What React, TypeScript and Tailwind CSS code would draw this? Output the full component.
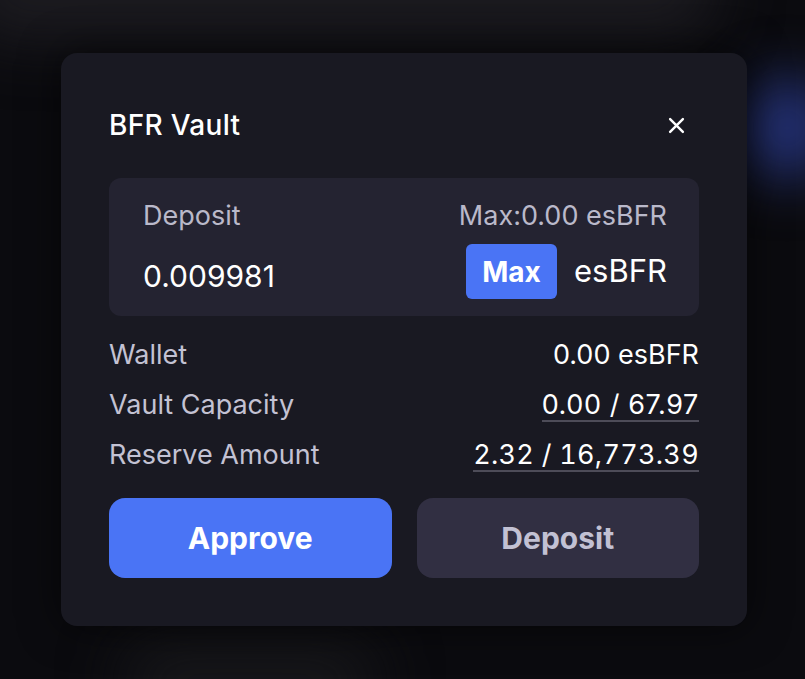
export default function App() {
  return (
    <div className="relative flex h-[679px] w-[805px] items-center justify-center overflow-hidden bg-[#0b0b0f] font-[Inter,'Liberation_Sans',sans-serif]">
      {/* background blurs */}
      <div className="pointer-events-none absolute left-[-40px] top-[-60px] h-[100px] w-[760px] rounded-full bg-[#1c1b20] blur-[30px]" />
      <div className="pointer-events-none absolute left-[742px] top-[78px] h-[100px] w-[90px] rounded-full bg-[#25337a] blur-[28px]" />
      <div className="pointer-events-none absolute left-[120px] top-[640px] h-[80px] w-[260px] rounded-full bg-[#17171a] blur-[30px]" />

      <div className="relative ml-[3px] flex h-[573px] w-[686px] flex-col rounded-[16px] bg-[#191922] px-[48px] pt-[48px] shadow-[0_0_40px_rgba(0,0,0,0.6)]">
        <div className="flex h-[48px] items-center justify-between">
          <span className="text-[28px] font-medium leading-none tracking-[0.3px] text-white">BFR Vault</span>
          <svg width="17" height="17" viewBox="0 0 16 16" className="mr-[14px]" fill="none">
            <path d="M2 2L14 14M14 2L2 14" stroke="white" strokeWidth="2.3" strokeLinecap="round" />
          </svg>
        </div>

        <div className="mt-[29px] flex h-[138px] flex-col rounded-[12px] bg-[#242331] pl-[34px] pr-[32px] pt-[24px]">
          <div className="flex h-[28px] items-center justify-between text-[27px] leading-[28px] text-[#bab9ca]">
            <span>Deposit</span>
            <span>Max:0.00 esBFR</span>
          </div>
          <div className="mt-[14px] flex h-[55px] items-center justify-between">
            <span className="pt-[9px] text-[30px] leading-[36px] text-white">0.009981</span>
            <div className="flex items-center gap-[17px]">
              <div className="flex h-[55px] w-[91px] items-center justify-center rounded-[6px] bg-[#4a74f5] text-[28px] font-bold text-white">
                Max
              </div>
              <span className="pb-[2px] text-[31px] leading-[36px] text-white">esBFR</span>
            </div>
          </div>
        </div>

        <div className="mt-[24px] flex flex-col gap-[20px] text-[27px] leading-[30px]">
          <div className="flex h-[30px] items-start justify-between">
            <span className="text-[#c3c2d3]">Wallet</span>
            <span className="text-white">0.00 esBFR</span>
          </div>
          <div className="flex h-[30px] items-start justify-between">
            <span className="text-[#c3c2d3]">Vault Capacity</span>
            <span className="border-b-2 border-[#4d4c58] tracking-[0.6px] text-white">0.00 / 67.97</span>
          </div>
          <div className="flex h-[30px] items-start justify-between">
            <span className="text-[#c3c2d3]">Reserve Amount</span>
            <span className="border-b-2 border-[#4d4c58] tracking-[0.3px] text-white tabular-nums">2.32 / 16,773.39</span>
          </div>
        </div>

        <div className="mt-[28px] flex h-[80px] gap-[25px]">
          <div className="flex flex-1 items-center justify-center rounded-[16px] bg-[#4a74f5] text-[30px] font-bold text-white">
            Approve
          </div>
          <div className="flex flex-1 items-center justify-center rounded-[16px] bg-[#312f42] text-[30px] font-bold text-[#c2c1d3]">
            Deposit
          </div>
        </div>
      </div>
    </div>
  );
}
